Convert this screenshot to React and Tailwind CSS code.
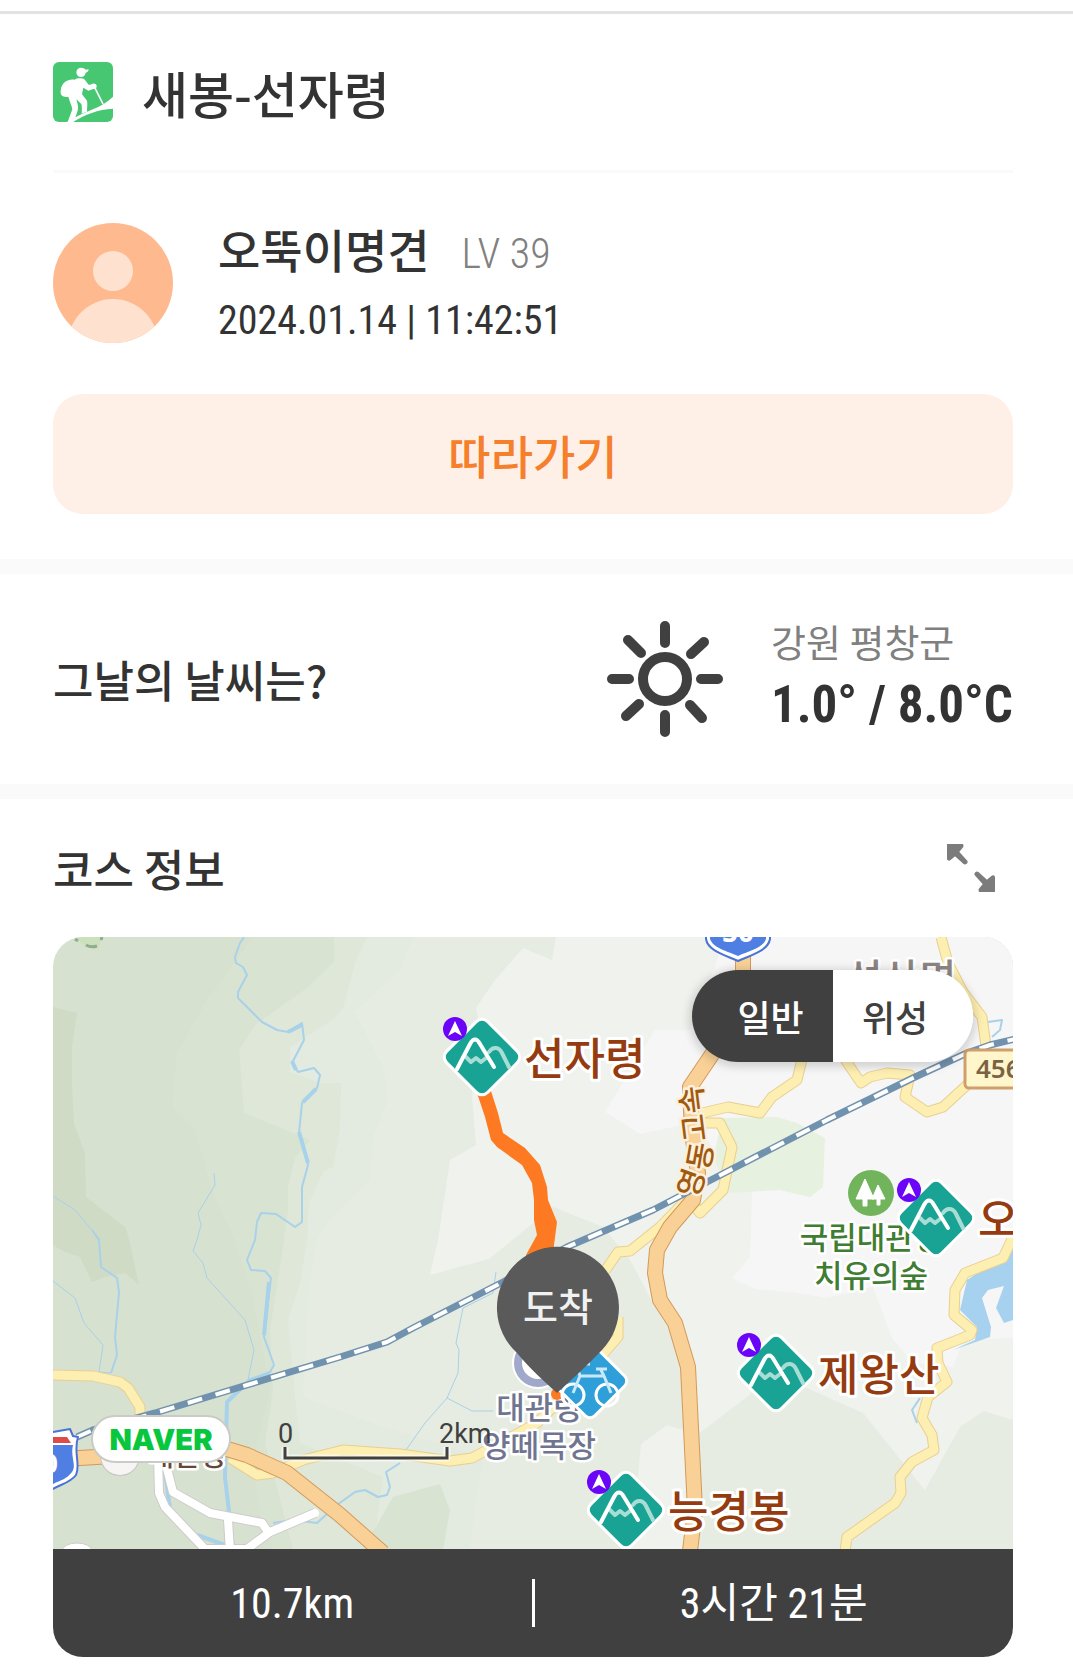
import React, { useState } from "react";

const contours = [
  { fill: "#cfdbc5", points: "0,70 24,76 19,110 19,150 21,187 32,216 33,260 73,291 77,306 86,348 72,336 52,340 39,345 27,320 12,315 0,308" },
  { fill: "#d9e3d2", points: "200,0 154,63 124,116 119,170 142,193 160,256 182,303 200,360 217,453 200,526 207,576 220,612 960,612 960,0" },
  { fill: "#dee7d8", points: "281,0 281,25 254,51 202,88 186,113 191,176 257,203 242,221 235,250 235,273 231,303 217,393 220,453 212,506 240,612 960,612 960,0" },
  { fill: "#e3eadf", points: "314,0 302,26 290,71 282,81 237,110 237,135 267,146 288,146 287,193 280,230 270,235 256,266 254,303 247,346 235,383 242,460 247,506 330,540 320,612 960,612 960,0" },
  { fill: "#e6ece2", points: "347,33 302,75 330,130 335,163 320,200 317,243 277,283 264,303 256,350 250,460 330,490 430,520 416,612 960,612 960,0 360,0" },
  { fill: "#d9e3d2", points: "340,560 387,547 397,573 390,612 310,612" },
  { fill: "#eff2ed", points: "503,0 499,23 470,11 442,43 423,71 427,90 419,160 423,208 397,223 385,303 377,338 436,322 500,270 550,290 577,323 600,366 624,406 640,500 652,492 694,460 720,436 810,476 872,553 907,490 931,474 960,483 960,0" },
  { fill: "#f6f6f6", points: "670,0 664,23 637,93 602,93 552,175 587,197 639,186 699,256 697,320 679,341 702,352 737,355 774,361 820,350 839,401 860,426 900,430 910,403 960,401 960,0" },
  { fill: "#eff2ed", points: "614,488 588,507 583,560 570,612 640,612 640,496" },
  { fill: "#e7f1df", points: "670,181 724,180 744,186 772,201 770,250 757,260 727,253 677,256 660,220" },
  { fill: "#cbe0bd", points: "22,0 50,0 45,10 33,10" },
  { fill: "#a6d2f0", points: "960,313 914,343 907,373 924,390 922,403 900,413 937,400 938,390 929,361 935,353 951,349 943,371 951,386 960,383" },
];

const rivers = [
  { w: 2, d: "M191 0 187 6 182 20 183 26 190 30 194 38 185 55 185 61 209 85 224 93 235 95 244 89 249 86 251 103 239 126 245 135 261 131 267 138 264 151 249 166 246 196 255 228 249 250 249 285 242 290 223 277 208 276 204 285 202 303 194 323 198 333 212 334 218 341 211 400 221 428 217 435 195 443" },
  { w: 4, d: "M217 436 195 445 174 465 172 540 180 610" },
  { w: 4, d: "M235 95 249 88M239 124 243 133M263 152 250 165M246 195 255 226M216 345 211 398" },
  { w: 1, d: "M161 236 162 248 145 276 148 288 144 303 140 314 150 326 154 341 192 383 201 413 195 443" },
  { w: 1, d: "M0 259 22 273 47 303" },
  { w: 2, d: "M39 293 46 303 48 330 64 341 66 355 62 400 64 418 58 436" },
  { w: 1, d: "M0 344 22 361 31 386 50 408 46 435 58 436" },
  { w: 2, d: "M347 526 333 535 337 550 334 558 325 560 312 553 302 555 284 568 264 586 240 583 220 586" },
  { w: 4, d: "M112 535 117 571M144 598 172 608" },
  { w: 1, d: "M443 335 440 356 410 371 403 406 406 413 405 436 394 461 372 486 353 513M394 461 419 474 440 474" },
  { w: 2, d: "M867 461 859 473 864 486M935 85 949 83 947 93 939 100" },
];

const yellowRoads =
  "M0 438 40 439 67 445 75 451 87 470 87 482M177 521 204 538 220 536 250 523 290 513 347 517 397 524 419 521 447 506 484 486 530 440 565 400 565 380M520 370 554 331 565 315 577 314 607 290 640 256M637 264 647 276 670 253 679 210 667 186 645 186M645 177 675 170 707 176 719 160 744 143 752 110M787 115 808 146 817 140 834 136 857 138 852 160 874 175 890 170 914 148 930 132M888 0 895 26 910 55 929 80 934 116M960 300 950 321 912 336 902 353 901 378 919 393 917 398 884 411 885 426 894 445 875 460 869 481 879 498 881 513 859 525 847 540 848 556 842 566 794 600 792 614";

const highways =
  "M690 0 690 60 660 116 637 150 639 196 645 236 640 263 617 290 604 313 602 336 607 363 622 386 635 430 642 573 637 614M10 522 60 519 174 512 194 518 234 536 287 578 330 616";

const whiteRoads =
  "M105 520 106 556 112 570 150 610M111 520 120 555 157 576 209 586 215 595M262 576 217 595 194 612 150 612M175 583 177 614";

const railway =
  "M24 500 40 493 102 476 194 448 287 420 334 405 360 391 450 345 514 310 600 273 654 245 774 183 860 141 914 116 937 108 962 102";

const courseTrack =
  "424,156 432,180 438,203 444,210 469,228 479,246 481,263 481,283 484,298 473,318 473,330 501,330 501,308 504,285 495,263 494,250 487,228 472,211 450,196 445,176 438,154";

const peaks = [
  { name: "선자령", x: 429, y: 120 },
  { name: "오봉산", x: 883, y: 281 },
  { name: "제왕산", x: 723, y: 436 },
  { name: "능경봉", x: 573, y: 573 },
];

const highwayName = [
  { char: "영", x: 638, y: 246, angle: -70 },
  { char: "동", x: 647, y: 219, angle: -80 },
  { char: "고", x: 641, y: 191, angle: -97 },
  { char: "속", x: 639, y: 163, angle: -97 },
];

const HikingIcon = () => (
  <svg viewBox="0 0 180 180" className="size-[60px] shrink-0 rounded-md" aria-hidden="true">
    <rect width="180" height="180" fill="#48c773" />
    <g fill="#fff">
      <path d="M84 17c8 0 12 3 14 6l9-1c0 6-4 9-9 10-1 8-7 13-14 13a14 14 0 0 1 0-28z" />
      <path d="M66 53c4-5 22-6 28-1 6 6 8 12 14 17l8-2c4-5 14-2 15 4 1 7-4 10-10 10l-15 5-15-9-4 20 14 18c4 6 1 24 1 34l-16 6c1-12 1-22-1-29L70 112c4 16 7 22 4 34l-12 34H44l14-38c-2-13-8-22-12-38-16 3-25-4-23-18 2-20 15-36 43-33z" />
      <path d="M42 180c24-16 54-27 85-41 20-9 38-20 53-35v36c-44 2-86 18-120 40z" />
    </g>
    <path d="M125 76 150 126" stroke="#fff" strokeWidth="5" />
  </svg>
);

const Avatar = () => (
  <svg viewBox="0 0 120 120" className="size-[120px] shrink-0 rounded-full" aria-hidden="true">
    <rect width="120" height="120" fill="#ffb98e" />
    <circle cx="60" cy="48" r="20" fill="#ffe1cf" />
    <circle cx="60" cy="121" r="45" fill="#ffe1cf" />
  </svg>
);

const SunIcon = () => (
  <svg viewBox="-59 -59 118 118" className="size-[118px] shrink-0" aria-hidden="true">
    <g fill="none" stroke="#404040" strokeWidth="10" strokeLinecap="round">
      <circle r="22" />
      <path d="M0-53V-36M0 36V53M-53 0H-36M36 0H53M-37-39-24-26M39-37 26-25M-39 37-26 25M37 39 25 26" />
    </g>
  </svg>
);

const ExpandIcon = () => (
  <svg viewBox="0 0 48 48" className="size-12" aria-hidden="true">
    <g fill="#7c7c7c" stroke="#7c7c7c" strokeWidth="5" strokeLinecap="round" strokeLinejoin="round">
      <path d="M2 14V2H14L9 8 18 18 8 9Z" />
      <path d="M46 34V46H34L39 40 30 30 40 39Z" />
    </g>
  </svg>
);

const PeakMarker = ({ name, x, y }) => (
  <g transform={`translate(${x} ${y})`}>
    <rect x="-29" y="-29" width="58" height="58" rx="8" transform="rotate(45)" fill="#18a394" stroke="#fff" strokeWidth="3" />
    <g fill="none" strokeLinecap="round" strokeLinejoin="round" strokeWidth="4">
      <path d="M-16 0-11 5-6 1-1 5 4 1M7-5C11-11 17-10 20-4L27 10" stroke="#a8ddd5" />
      <path d="M-25 12-12-13C-9-19-5-19-2-13L12 10" stroke="#fff" />
    </g>
    <circle cx="-27" cy="-28" r="12" fill="#6a05f7" />
    <path d="M-27-36-20-21-27-25-34-21Z" fill="#fff" />
    <text x="42" y="18" fontSize="44" fontWeight="500" fill="#953b10" stroke="#fff" strokeWidth="6" paintOrder="stroke">
      {name}
    </text>
  </g>
);

const CourseMap = () => (
  <svg
    viewBox="0 0 960 612"
    preserveAspectRatio="xMidYMid slice"
    className="block h-[612px] w-full"
    role="img"
    aria-label="새봉-선자령 코스 지도"
    strokeLinejoin="round">
    <rect width="960" height="612" fill="#d7e1d0" />
    {contours.map((area, index) => (
      <polygon key={index} points={area.points} fill={area.fill} />
    ))}
    <path d="M22 2 25 4M33 8C38 11 41 10 44 9M48 3 49 0" fill="none" stroke="#8fae8a" strokeWidth="3" />
    {rivers.map((river, index) => (
      <path key={index} d={river.d} fill="none" stroke="#a8d1ea" strokeWidth={river.w} />
    ))}

    {/* Roads: casing first, then the surface */}
    <g fill="none">
      <path d={whiteRoads} stroke="#cfcbcb" strokeWidth="10" />
      <path d={whiteRoads} stroke="#fff" strokeWidth="8" strokeLinecap="round" />
      <path d={yellowRoads} stroke="#e8cf90" strokeWidth="11" />
      <path d={yellowRoads} stroke="#fdeeb2" strokeWidth="9" />
      <path d={highways} stroke="#d39a5a" strokeWidth="16" />
      <path d={highways} stroke="#f9d197" strokeWidth="14" />
      <path d={railway} stroke="#7192ae" strokeWidth="7" />
      <path d={railway} stroke="#fff" strokeWidth="4" strokeDasharray="15 14" />
    </g>
    <ellipse cx="24" cy="614" rx="15" ry="8" fill="#fff" stroke="#cfcbcb" />

    {/* Route shields */}
    <g stroke="#4a73d6" strokeWidth="2" fontFamily="Noto Sans, sans-serif">
      <path d="M653-20V2C655 14 672 18 685 24 698 18 715 14 717 2V-20Z" fill="#fff" />
      <path d="M657-20V2C660 11 674 14 685 19 696 14 710 11 713 2V-20Z" fill="#4f7fe3" stroke="none" />
      <text x="685" y="5" fontSize="28" fontWeight="700" textAnchor="middle" fill="#fff" stroke="none">50</text>
      <path d="M-26 498C-15 500-5 498 0 495L17 492 20 499 25 500C20 515 28 528 23 538 17 546 8 547 0 552-12 547-26 545-26 530Z" fill="#fff" />
      <path d="M-26 508H20C17 520 24 528 19 535 14 542 8 543 0 547-20 543-26 540-26 530Z" fill="#4f7fe3" stroke="none" />
      <path d="M-26 500H14L18 506H-26Z" fill="#dd4b4b" stroke="none" />
      <text x="-10" y="536" fontSize="26" fontWeight="700" fill="#fff" stroke="none">0</text>
      <rect x="912" y="113" width="70" height="38" rx="4" fill="#fff6cb" stroke="#cf9f6c" strokeWidth="3" />
      <text x="923" y="141" fontSize="26" fontWeight="600" fill="#7a6343" stroke="none">456</text>
    </g>

    <g fontWeight="500" paintOrder="stroke" stroke="#fff" strokeWidth="5">
      {highwayName.map((glyph) => (
        <text
          key={glyph.char}
          transform={`translate(${glyph.x} ${glyph.y}) rotate(${glyph.angle})`}
          y="11"
          fontSize="30"
          textAnchor="middle"
          fill="#a05a10"
          stroke="#fdf0dc">
          {glyph.char}
        </text>
      ))}
      <text x="848" y="56" fontSize="40" textAnchor="middle" fill="#8d8583">성산면</text>
      <circle cx="67" cy="519" r="19" fill="#f6f4f4" stroke="#c9c4c4" strokeWidth="2" />
      <text x="134" y="529" fontSize="28" textAnchor="middle" fill="#664736">대관령</text>
      <g fontSize="31" textAnchor="middle">
        <text x="818" y="312" fill="#3f7d33">국립대관령</text>
        <text x="818" y="350" fill="#3f7d33">치유의숲</text>
        <circle cx="485" cy="426" r="26" fill="#fff" stroke="none" />
        <circle cx="485" cy="426" r="20" fill="none" stroke="#a0a9c9" strokeWidth="8" />
        <text x="486" y="482" fill="#6f7590">대관령</text>
        <text x="486" y="520" fill="#6f7590">양떼목장</text>
      </g>
    </g>

    <circle cx="818" cy="256" r="23" fill="#72b45c" />
    <path d="M812 242 821 262H803ZM825 248 832 262H819ZM810 260H814V269H810ZM824 260H827V268H824Z" fill="#fff" stroke="#fff" />

    <polygon points={courseTrack} fill="#fe7a22" />
    <circle cx="504" cy="457" r="6" fill="#fe7a22" />

    <g transform="translate(537 444)">
      <rect x="-28" y="-28" width="56" height="56" rx="7" transform="rotate(45)" fill="#2f9fda" stroke="#fff" strokeWidth="3" />
      <g fill="none" stroke="#fff" strokeWidth="3">
        <circle cx="-17" cy="14" r="11" />
        <circle cx="17" cy="14" r="11" />
        <path d="M-17 12-10-5H14L21 12M-10-5-13-14M14-5 11-11M-14-17H0M6-12H17" stroke="#c9e9fa" />
      </g>
    </g>

    <path d="M504 456C491 444 477 432 464 416A61 61 0 1 1 549 413C535 428 519 442 504 456Z" fill="#5a5a5a" />
    <text x="505" y="384" fontSize="38" fontWeight="500" textAnchor="middle" fill="#f1f1f1">도착</text>

    {peaks.map((peak) => (
      <PeakMarker key={peak.name} {...peak} />
    ))}

    {/* Scale bar */}
    <g fill="none">
      <path d="M232 510V521H394V510" stroke="#fff" strokeOpacity="0.6" strokeWidth="7" />
      <path d="M232 510V521H394V510" stroke="#404040" strokeWidth="3" strokeLinejoin="miter" />
    </g>
    <g fontFamily="Roboto, sans-serif" fontSize="27" fill="#404040">
      <text x="225" y="506">0</text>
      <text x="386" y="506">2km</text>
    </g>

    <rect x="39" y="479" width="138" height="46" rx="23" fill="#fff" stroke="#c9cbc4" strokeWidth="2" />
    <text x="108" y="513" fontFamily="Inter, sans-serif" fontSize="29" fontWeight="900" textAnchor="middle" fill="#08c73f">
      NAVER
    </text>
  </svg>
);

const App = () => {
  const [mapType, setMapType] = useState("normal");

  return (
    <main className="min-h-screen bg-white pt-[11px] pb-5 font-['Noto_Sans_CJK_KR',sans-serif] text-[#333333]">
      <section className="border-t-3 border-[#e3e3e3] pr-[60px] pb-[45px] pl-[53px]">
        <header className="flex items-center gap-[29px] border-b-3 border-[#fafafa] py-12">
          <HikingIcon />
          <h1 className="text-[50px] leading-[60px] font-medium">새봉-선자령</h1>
        </header>

        <div className="flex items-center gap-[45px] pt-[50px] pb-[51px]">
          <Avatar />
          <div className="-my-4 pt-1">
            <div className="flex items-baseline gap-8">
              <strong className="text-[46px] leading-[70px] font-medium">오뚝이명견</strong>
              <span className="font-['Roboto_Condensed','Roboto',sans-serif] text-[42px] leading-[60px] font-light text-[#808080]">
                LV 39
              </span>
            </div>
            <p className="font-['Roboto_Condensed','Roboto',sans-serif] text-[40px] leading-[74px]">
              2024.01.14 | 11:42:51
            </p>
          </div>
        </div>

        <button
          type="button"
          className="h-[120px] w-full rounded-[30px] bg-[#fff0e7] text-[46px] font-medium text-[#f57f2b]">
          따라가기
        </button>
      </section>

      <section className="flex h-[240px] items-center justify-between border-y-15 border-[#fafafa] pr-[60px] pl-[53px]">
        <h2 className="text-[44px] font-medium">그날의 날씨는?</h2>
        <div className="flex items-center gap-[47px]">
          <SunIcon />
          <div className="w-[242px] whitespace-nowrap">
            <p className="text-[38px] leading-[52px] text-[#808080]">강원 평창군</p>
            <p className="font-['Roboto_Condensed','Roboto',sans-serif] text-[51px] leading-[76px] font-bold">
              1.0° / 8.0°C
            </p>
          </div>
        </div>
      </section>

      <section className="pr-[60px] pl-[53px]">
        <div className="flex h-[138px] items-center justify-between pr-[18px]">
          <h2 className="text-[44px] font-medium">코스 정보</h2>
          <button type="button" aria-label="지도 확대">
            <ExpandIcon />
          </button>
        </div>

        <div className="overflow-hidden rounded-[30px]">
          <div className="relative">
            <CourseMap />
            <div className="absolute top-[33px] right-10 flex h-[92px] overflow-hidden rounded-full text-4xl font-medium shadow-[0_2px_8px_3px_rgba(0,0,0,0.15)]">
              <button
                type="button"
                aria-pressed={mapType === "normal"}
                onClick={() => setMapType("normal")}
                className={`w-[141px] pl-4 ${
                  mapType === "normal" ? "bg-[#404040] text-white" : "bg-white text-[#404040]"
                }`}>
                일반
              </button>
              <button
                type="button"
                aria-pressed={mapType === "satellite"}
                onClick={() => setMapType("satellite")}
                className={`w-[140px] pr-4 ${
                  mapType === "satellite" ? "bg-[#404040] text-white" : "bg-white text-[#404040]"
                }`}>
                위성
              </button>
            </div>
          </div>

          <div className="flex h-[108px] items-center bg-[#404040] text-center font-['Roboto_Condensed','Roboto','Noto_Sans_CJK_KR',sans-serif] text-[42px] text-white">
            <p className="flex-1">10.7km</p>
            <div className="h-12 w-[3px] bg-white" />
            <p className="flex-1">3시간 21분</p>
          </div>
        </div>
      </section>
    </main>
  );
};

export default App;
